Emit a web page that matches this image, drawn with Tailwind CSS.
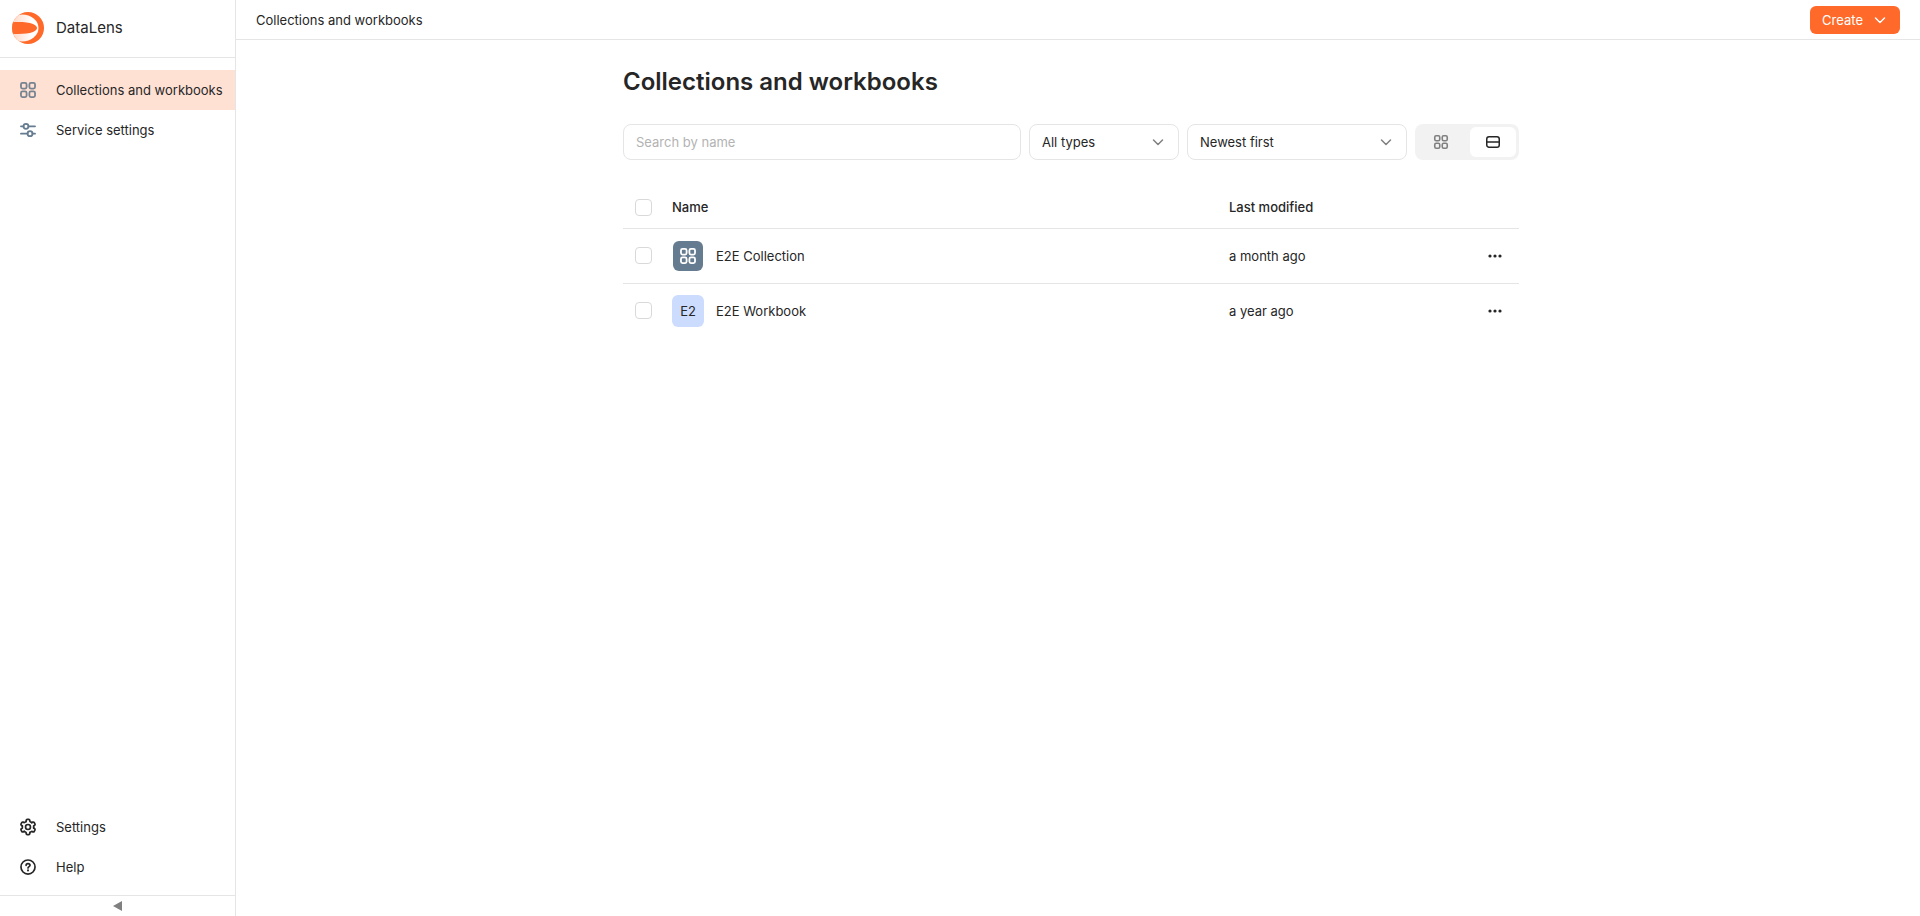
<!DOCTYPE html>
<html lang="en">
<head>
<meta charset="utf-8">
<meta name="viewport" content="width=device-width, initial-scale=1">
<title>Collections and workbooks</title>
<script src="https://cdn.jsdelivr.net/npm/@tailwindcss/browser@4"></script>
</head>
<body class="flex min-h-screen bg-white font-['Inter',sans-serif] text-[13px] leading-[18px] text-[#262626]">
<svg class="hidden" aria-hidden="true">
  <symbol id="cells" viewBox="0 0 16 16"><g fill="none" stroke="currentColor" stroke-width="1.6"><rect x="1.75" y="1.75" width="5" height="5" rx="1.4"/><rect x="9.25" y="1.75" width="5" height="5" rx="1.4"/><rect x="1.75" y="9.25" width="5" height="5" rx="1.4"/><rect x="9.25" y="9.25" width="5" height="5" rx="1.4"/></g></symbol>
  <symbol id="chevron" viewBox="0 0 16 16"><path d="M3.5 6 8 10.5 12.5 6" fill="none" stroke="currentColor" stroke-width="1.5" stroke-linecap="round" stroke-linejoin="round"/></symbol>
  <symbol id="dots" viewBox="0 0 16 16"><g fill="currentColor"><circle cx="3" cy="8" r="1.6"/><circle cx="8" cy="8" r="1.6"/><circle cx="13" cy="8" r="1.6"/></g></symbol>
</svg>

<aside class="flex w-[236px] shrink-0 flex-col border-r border-[#e5e5e5]">
  <a href="#" class="flex h-[58px] items-start gap-3 border-b border-[#e5e5e5] pt-3 pl-3 text-[15px] leading-8">
    <svg class="size-8" viewBox="0 0 32 32" aria-hidden="true">
      <defs>
        <linearGradient id="lens" x1="0" x2="1" y1="0" y2="0"><stop offset=".15" stop-color="#ffd3c0"/><stop offset=".8" stop-color="#fff"/></linearGradient>
        <clipPath id="disc"><circle cx="16" cy="16" r="16"/></clipPath>
      </defs>
      <g clip-path="url(#disc)">
        <rect width="32" height="32" fill="#ff6929"/>
        <ellipse cx="10" cy="16" rx="16.5" ry="13.5" fill="url(#lens)"/>
        <path d="M0 10.2C9 9.700 16 10.200 21 12C23.800 13.200 25 14.700 25 16C25 17.300 23.800 18.800 21 20C16 21.800 9 22.300 0 21.800Z" fill="#ff6929"/>
      </g>
    </svg>
    DataLens
  </a>
  <nav class="flex grow flex-col pt-3">
    <a href="#" aria-current="page" class="flex h-10 items-center gap-[19px] bg-[#ffe1d4] pl-[19px] whitespace-nowrap"><svg class="size-[18px] shrink-0 text-[#768391]"><use href="#cells"/></svg>Collections and workbooks</a>
    <a href="#" class="flex h-10 items-center gap-[19px] pl-[19px]">
      <svg class="size-[18px] text-[#657b8f]" viewBox="0 0 16 16" fill="none" stroke="currentColor" stroke-width="1.6" stroke-linecap="round"><path d="M1.750 4.750H4M8.500 4.750H14.250M1.750 11.250H7.600M12 11.250H14.250"/><circle cx="6.200" cy="4.750" r="2.200"/><circle cx="9.800" cy="11.250" r="2.200"/></svg>
      Service settings</a>
  </nav>
  <div class="flex flex-col pb-2">
    <button type="button" class="flex h-10 items-center gap-[19px] pl-[19px]">
      <svg class="size-[18px]" viewBox="0 0 16 16" fill="none" stroke="currentColor" stroke-width="1.5" stroke-linecap="round" stroke-linejoin="round">
        <path id="tooth" d="M6.260 3.210 6.400 2.100Q6.500 1.280 7.300 1.280H8.700Q9.500 1.280 9.600 2.100L9.740 3.210 11.280 4.090"/>
        <use href="#tooth" transform="rotate(60 8 8)"/><use href="#tooth" transform="rotate(120 8 8)"/><use href="#tooth" transform="rotate(180 8 8)"/><use href="#tooth" transform="rotate(240 8 8)"/><use href="#tooth" transform="rotate(300 8 8)"/>
        <circle cx="8" cy="8" r="2.200"/>
      </svg>
      Settings</button>
    <button type="button" class="flex h-10 items-center gap-[19px] pl-[19px]">
      <svg class="size-[18px]" viewBox="0 0 16 16" fill="none" stroke="currentColor" stroke-width="1.5" stroke-linecap="round"><circle cx="8" cy="8" r="6.250"/><path d="M6.300 6.500C6.300 5.500 7 5 8 5S9.800 5.600 9.800 6.500C9.800 7.600 8 7.700 8 8.900"/><circle cx="8" cy="11" r=".9" fill="currentColor" stroke="none"/></svg>
      Help</button>
  </div>
  <button type="button" aria-label="Collapse menu" class="flex h-[21px] items-center justify-center border-t border-[#e5e5e5] text-[#808080]"><svg class="h-[10px] w-[9px]" viewBox="0 0 9 10"><path d="M0 5 9 0V10Z" fill="currentColor"/></svg></button>
</aside>

<div class="flex min-w-0 grow flex-col">
  <header class="flex h-10 items-center justify-between border-b border-[#e5e5e5] px-5">
    <a href="#">Collections and workbooks</a>
    <button type="button" class="flex h-7 items-center gap-[9px] rounded-md bg-[#ff6929] px-3 text-white">Create<svg class="size-4"><use href="#chevron"/></svg></button>
  </header>
  <main class="grow pr-[14px]">
    <div class="mx-auto max-w-[896px] pt-[25px]">
      <h1 class="text-2xl leading-[34px] font-semibold">Collections and workbooks</h1>
      <div class="mt-[25px] flex gap-2">
        <input type="text" aria-label="Search by name" placeholder="Search by name" class="h-9 min-w-0 grow rounded-lg border border-[#e5e5e5] px-3 placeholder:text-[#b3b3b3]">
        <div class="relative w-[150px]">
          <select aria-label="Type" class="h-9 w-full appearance-none rounded-lg border border-[#e5e5e5] px-3"><option>All types</option></select>
          <svg class="pointer-events-none absolute top-[10px] right-[13px] size-4 text-[#808080]"><use href="#chevron"/></svg>
        </div>
        <div class="relative w-[220px]">
          <select aria-label="Sort order" class="h-9 w-full appearance-none rounded-lg border border-[#e5e5e5] px-3"><option>Newest first</option></select>
          <svg class="pointer-events-none absolute top-[10px] right-[13px] size-4 text-[#808080]"><use href="#chevron"/></svg>
        </div>
        <div class="grid h-9 w-[104px] grid-cols-2 gap-[6px] rounded-lg bg-[#f2f2f2] p-[3px]">
          <button type="button" aria-label="Grid view" class="flex items-center justify-center rounded-md text-[#808080]"><svg class="size-4"><use href="#cells"/></svg></button>
          <button type="button" aria-label="Table view" aria-pressed="true" class="flex items-center justify-center rounded-md bg-white"><svg class="size-4" viewBox="0 0 16 16" fill="none" stroke="currentColor" stroke-width="1.5"><rect x="1.750" y="2.750" width="12.500" height="10.500" rx="2.250"/><path d="M2 8H14"/></svg></button>
        </div>
      </div>
      <table class="mt-[27px] w-full table-fixed text-left">
        <colgroup><col class="w-[49px]"><col><col class="w-[242px]"><col class="w-[48px]"></colgroup>
        <thead>
          <tr class="h-[41px] border-b border-[#e5e5e5]">
            <th class="pl-3"><input type="checkbox" aria-label="Select all" class="block size-[17px] appearance-none rounded-sm border border-[#d9d9d9]"></th>
            <th class="font-medium">Name</th>
            <th class="font-medium">Last modified</th>
            <th></th>
          </tr>
        </thead>
        <tbody>
          <tr class="h-[55px] border-b border-[#e5e5e5]">
            <td class="pl-3"><input type="checkbox" aria-label="Select E2E Collection" class="block size-[17px] appearance-none rounded-sm border border-[#d9d9d9]"></td>
            <td><a href="#" class="flex items-center gap-3"><span class="flex size-8 items-center justify-center"><span class="flex size-[30px] items-center justify-center rounded-md bg-[#657b8f] text-white"><svg class="size-[18px]"><use href="#cells"/></svg></span></span>E2E Collection</a></td>
            <td>a month ago</td>
            <td><button type="button" aria-label="E2E Collection actions" class="flex size-12 items-center justify-center"><svg class="size-4"><use href="#dots"/></svg></button></td>
          </tr>
          <tr class="h-[55px]">
            <td class="pl-3"><input type="checkbox" aria-label="Select E2E Workbook" class="block size-[17px] appearance-none rounded-sm border border-[#d9d9d9]"></td>
            <td><a href="#" class="flex items-center gap-3"><span class="flex size-8 items-center justify-center rounded-md bg-[#ccdcff]">E2</span>E2E Workbook</a></td>
            <td>a year ago</td>
            <td><button type="button" aria-label="E2E Workbook actions" class="flex size-12 items-center justify-center"><svg class="size-4"><use href="#dots"/></svg></button></td>
          </tr>
        </tbody>
      </table>
    </div>
  </main>
</div>
</body>
</html>
